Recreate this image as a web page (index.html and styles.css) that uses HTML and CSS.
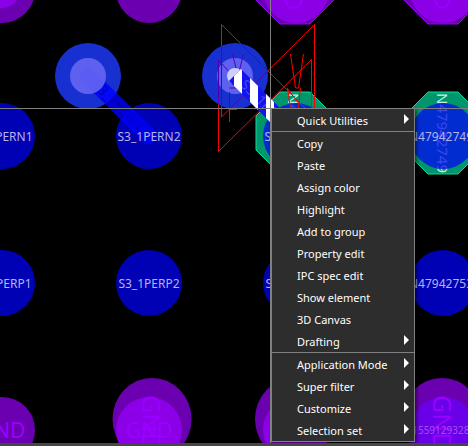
FILE: index.html
```html
<!DOCTYPE html>
<html lang="en">
<head>
<meta charset="utf-8">
<title>PCB canvas</title>
<link rel="stylesheet" href="styles.css">
</head>
<body>
<main class="workspace">
  <svg class="board" width="468" height="446" aria-label="Board layout">
    <defs>
      <polygon id="octagon" points="-15,-41 15,-41 39,-17 39,17 15,41 -15,41 -39,17 -39,-17"/>
      <g id="ratsnest">
        <path d="M221.500 24.500V117L314.500 24.500V112M221.500 24.500L306 109M218.500 60V151.500L311.500 59.500V112M218.500 60L262 108"/>
        <path d="M232.500 54L240 84M243.500 54L236 84M229.500 122V92M229.500 109.500H237M229.500 88H242M290.500 54L295.500 88H298.500L303.500 54M287.500 88L291 112M300.500 88L298 112M287 88L300 105"/>
      </g>
      <clipPath id="via-clip"><circle cx="235" cy="76" r="33"/></clipPath>
      <clipPath id="pad-clip"><circle cx="443" cy="136" r="33"/></clipPath>
      <clipPath id="left-pad-clip"><circle cx="296" cy="136" r="33"/></clipPath>
      <pattern id="stripes" x="234" y="0" width="16" height="16" patternUnits="userSpaceOnUse">
        <rect class="white" width="8" height="16"/>
      </pattern>
    </defs>

    <g class="violet-dark">
      <circle cx="2" cy="-10" r="33"/>
      <circle cx="149" cy="-10" r="33"/>
      <circle cx="2" cy="430" r="33"/>
      <ellipse cx="152" cy="419" rx="39.500" ry="41"/>
      <ellipse cx="294.500" cy="419" rx="39.500" ry="41"/>
      <ellipse cx="442" cy="419" rx="39.500" ry="41"/>
    </g>
    <g class="violet-octagon">
      <use href="#octagon" x="295" y="-17"/>
      <use href="#octagon" x="443" y="-17"/>
    </g>
    <g class="violet">
      <circle cx="2" cy="-10" r="18"/>
      <circle cx="296" cy="-10" r="33"/>
      <circle cx="443" cy="-10" r="33"/>
      <circle cx="149" cy="430" r="33"/>
      <circle cx="296" cy="430" r="33"/>
    </g>
    <circle class="indigo" cx="443" cy="430" r="33"/>
    <g class="ring">
      <ellipse cx="293.500" cy="0" rx="8" ry="8"/>
      <ellipse cx="442.500" cy="0" rx="7" ry="8"/>
    </g>

    <g class="pad">
      <circle cx="2" cy="136" r="33"/>
      <circle cx="149" cy="136" r="33"/>
      <circle cx="2" cy="283" r="33"/>
      <circle cx="149" cy="283" r="33"/>
      <circle cx="296" cy="283" r="33"/>
      <circle cx="443" cy="283" r="33"/>
    </g>
    <g class="green-octagon">
      <use href="#octagon" x="295" y="133"/>
      <use href="#octagon" x="443" y="133"/>
    </g>
    <text class="vertical white" transform="translate(437 133) rotate(90)">N47942749</text>
    <text class="vertical white" transform="translate(288 133) rotate(90)">N47942748</text>
    <circle class="pad-bright" cx="296" cy="136" r="33"/>
    <circle class="pad-bright" cx="443" cy="136" r="33"/>
    <g clip-path="url(#pad-clip)">
      <text class="vertical vertical-blue" transform="translate(437 133) rotate(90)">N47942749</text>
    </g>
    <g clip-path="url(#left-pad-clip)">
      <text class="vertical vertical-blue" transform="translate(288 133) rotate(90)">N47942748</text>
    </g>

    <circle class="via" cx="88" cy="76" r="33"/>
    <path class="trace" d="M88 76L149 136"/>
    <text class="trace-text" transform="translate(121 108) rotate(45)" y="5">S3_1PERN2</text>
    <circle class="via-core" cx="88" cy="76" r="18"/>

    <use class="rats" href="#ratsnest"/>
    <circle class="via" cx="235" cy="76" r="33"/>
    <circle class="via-core" cx="235" cy="76" r="18"/>
    <g clip-path="url(#via-clip)"><use class="rats rats-over" href="#ratsnest"/></g>
    <circle class="via-hole" cx="235" cy="76" r="8"/>
    <path class="trace-blue" d="M229 81L241 69L301 129L289 141Z"/>
    <text class="trace-text striped-text" transform="translate(269 108) rotate(45)" y="5">S3_1PERN3</text>
    <path fill="url(#stripes)" d="M229 81L241 69L301 129L289 141Z"/>

    <g class="net">
      <text x="1" y="141">S3_1PERN1</text>
      <text x="149" y="141">S3_1PERN2</text>
      <text x="296" y="141">S3_1PERN3</text>
      <text x="441" y="141">N47942749</text>
      <text x="1" y="288">S3_1PERP1</text>
      <text x="149" y="288">S3_1PERP2</text>
      <text x="296" y="288">S3_1PERP3</text>
      <text x="441" y="288">N47942753</text>
    </g>
    <g class="gnd">
      <text x="2" y="438">GND</text>
      <text x="149" y="438">GND</text>
      <text class="gnd-vertical" transform="translate(142 395) rotate(90)">GND</text>
      <text class="gnd-vertical" transform="translate(433 395) rotate(90)">GND</text>
    </g>
    <text class="net-number" x="437" y="434">N1559129328</text>

    <path class="crosshair" d="M270.500 0V446M0 108.500H468"/>
  </svg>

  <div class="menu" role="menu">
    <button class="item more" role="menuitem">Quick Utilities</button>
    <hr class="separator">
    <button class="item" role="menuitem">Copy</button>
    <button class="item" role="menuitem">Paste</button>
    <button class="item" role="menuitem">Assign color</button>
    <button class="item" role="menuitem">Highlight</button>
    <button class="item" role="menuitem">Add to group</button>
    <button class="item" role="menuitem">Property edit</button>
    <button class="item" role="menuitem">IPC spec edit</button>
    <button class="item" role="menuitem">Show element</button>
    <button class="item" role="menuitem">3D Canvas</button>
    <button class="item more" role="menuitem">Drafting</button>
    <hr class="separator">
    <button class="item more" role="menuitem">Application Mode</button>
    <button class="item more" role="menuitem">Super filter</button>
    <button class="item more" role="menuitem">Customize</button>
    <button class="item more" role="menuitem">Selection set</button>
  </div>
</main>
<footer class="edge"></footer>
</body>
</html>
```

FILE: styles.css
```css
* { box-sizing: border-box; }

body {
  margin: 0;
  height: 100vh;
  display: flex;
  flex-direction: column;
  overflow: hidden;
  background: #000;
  font-family: "Noto Sans", "Open Sans", sans-serif;
}

.workspace {
  position: relative;
  flex: 1;
  min-height: 0;
}

.board { display: block; max-height: 100%; }

.edge {
  position: relative;
  height: 3px;
  background: #464646;
}

/* Board artwork */
.violet-dark { fill: #6b00b0; }
.violet { fill: #8c00e8; }
.indigo { fill: #6a00e8; }
.violet-octagon { fill: #6b00b0; stroke: #9a00ff; }
.ring { fill: none; stroke: #9a00ff; stroke-width: 2; }
.pad { fill: #0000b4; }
.pad-bright { fill: #002cd0; }
.green-octagon { fill: #00966b; stroke: #00e09c; }
.via { fill: #1830d0; }
.via-core { fill: #6868f4; opacity: 0.88; }
.via-hole { fill: #d0ceff; }
.trace { stroke: #0000ff; stroke-width: 16; stroke-linecap: round; opacity: 0.8; }
.trace-blue { fill: #1414f0; }
.white { fill: #fff; }
.rats { fill: none; stroke: #f00; }
.rats-over { stroke: #5000b4; }
.crosshair { stroke: #808080; }

.net { font-size: 12px; text-anchor: middle; fill: #b4b4ee; }
.trace-text { font-size: 14px; text-anchor: middle; fill: #0000c8; }
.striped-text { fill: #4646ff; }
.vertical { font-size: 15px; text-anchor: middle; }
.vertical.white { fill: #c8f0e4; }
.vertical-blue { fill: #3c46f0; }
.gnd { font-size: 21px; text-anchor: middle; fill: #9a00ff; }
.gnd-vertical { font-size: 25px; text-anchor: start; }
.net-number { font-size: 10px; text-anchor: middle; fill: #a050f0; }

/* Context menu, floating at the cursor */
.menu {
  position: absolute;
  left: 270px;
  top: 108px;
  width: 145px;
  border: 1px solid #808080;
  border-left-width: 2px;
  background: #2d2d2d;
  box-shadow: 2px 2px 3px rgba(0, 0, 0, 0.5);
}

.item {
  display: flex;
  align-items: center;
  justify-content: space-between;
  width: 100%;
  height: 22px;
  margin: 0;
  padding: 1px 5px 0 25px;
  border: 0;
  background: none;
  color: #fff;
  font: 11px/19px "Noto Sans", "Open Sans", sans-serif;
  text-align: left;
}

.more::after {
  content: "";
  margin-bottom: 3px;
  border: 5px solid transparent;
  border-left-color: #fff;
  border-right-width: 0;
}

.separator {
  height: 1px;
  margin: 0;
  border: 0;
  background: #808080;
}
```
